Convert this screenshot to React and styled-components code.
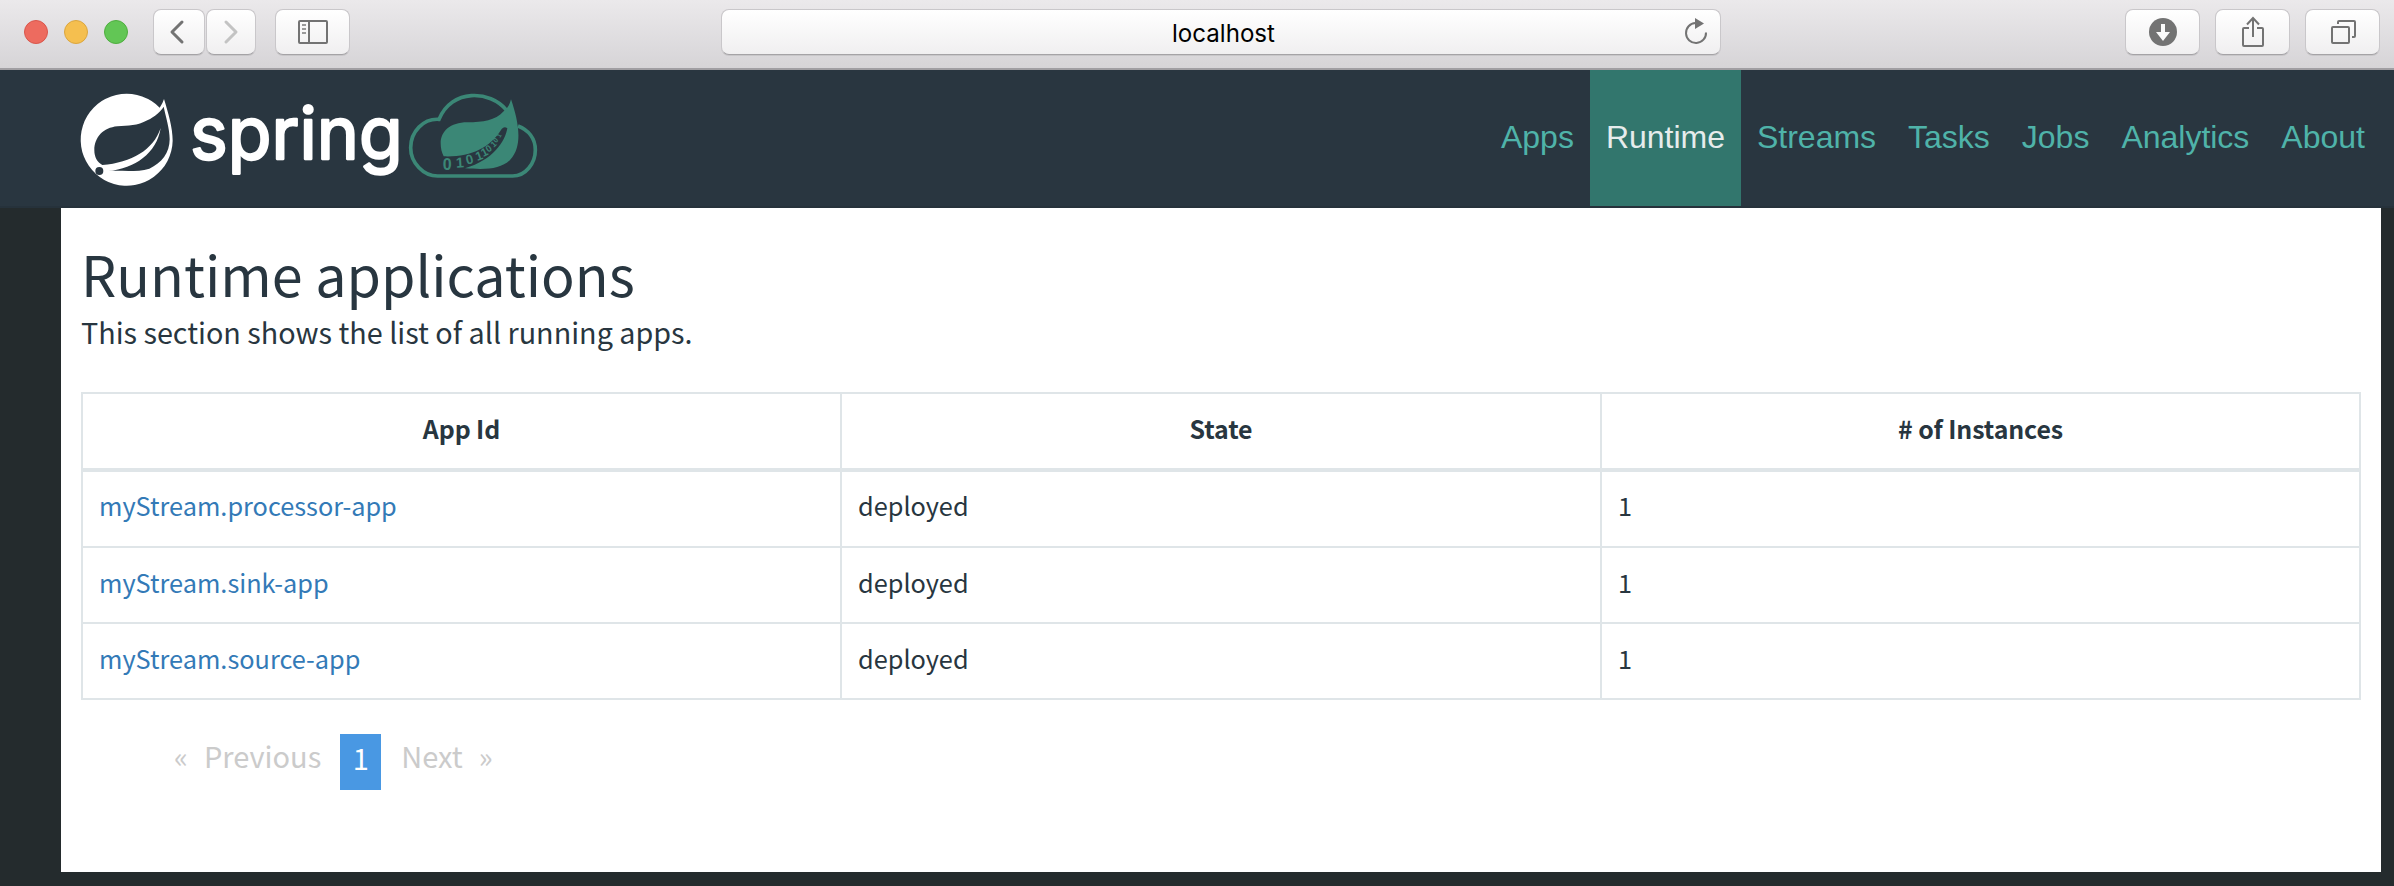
import React from 'react';
import styled, { createGlobalStyle, css } from 'styled-components';

const GlobalStyle = createGlobalStyle`
  * { box-sizing: border-box; }
  body {
    margin: 0;
    background: #242b2d;
    color: #283640;
    font-family: "Noto Sans CJK SC", sans-serif;
  }
`;

const Window = styled.div`
  display: flex;
  flex-direction: column;
  height: 886px;
  overflow: hidden;
`;

/* Browser toolbar */

const TitleBar = styled.header`
  display: flex;
  align-items: flex-start;
  height: 70px;
  padding: 9px 0 0 24px;
  border-bottom: 2px solid #a09ea2;
  background: linear-gradient(#ebe9eb, #d6d4d7);
`;

const Lights = styled.div`
  display: flex;
  gap: 16px;
  margin: 11px 25px 0 0;
`;

const Light = styled.span`
  width: 24px;
  height: 24px;
  border-radius: 50%;
  border: 1px solid ${(p) => p.$edge};
  background: ${(p) => p.$fill};
`;

const controlFace = css`
  display: flex;
  align-items: center;
  justify-content: center;
  height: 46px;
  padding: 0;
  border: 1px solid #c9c7ca;
  border-bottom-color: #a5a3a6;
  border-radius: 8px;
  background: linear-gradient(#ffffff, #f0eff0);
  box-shadow: 0 1px 0 rgba(0, 0, 0, 0.08);
`;

const ToolButton = styled.button`
  ${controlFace}
  width: ${(p) => p.$width || 75}px;
  padding-right: ${(p) => p.$nudge || 0}px;
`;

const History = styled.div`
  display: flex;
  gap: 1px;
  margin-right: 19px;
`;

const AddressBar = styled.div`
  ${controlFace}
  position: relative;
  width: 1000px;
  margin: 0 404px 0 371px;
  padding: 3px 0 0 5px;
  color: #000;
  font: 24.1px/41px Inter, sans-serif;
`;

const Reload = styled.svg`
  position: absolute;
  top: 7px;
  right: 12px;
`;

const Actions = styled.div`
  display: flex;
  gap: 15px;
`;

/* Site header */

const SiteHeader = styled.div`
  display: flex;
  align-items: flex-start;
  height: 138px;
  padding-left: 81px;
  border-bottom: 2px solid #26323b;
  background: #293640;
`;

const LogoArt = styled.svg`
  width: 456px;
  height: 92px;
  margin: 24px 948px 0 0;
  flex: none;
  overflow: visible;
`;

const Nav = styled.nav`
  display: flex;
`;

const NavLink = styled.a`
  height: 136px;
  padding: 0 16px;
  color: ${(p) => (p.$active ? '#e6ecec' : '#4fb3a9')};
  background: ${(p) => (p.$active ? '#32766d' : 'transparent')};
  font: 32px/135px "Liberation Sans", sans-serif;
  letter-spacing: -0.01px;
  white-space: nowrap;
`;

/* Page */

const Panel = styled.main`
  width: 2320px;
  height: 664px;
  margin-left: 61px;
  padding: 35px 20px 0;
  background: #fff;
`;

const Title = styled.h1`
  margin: 0;
  font-size: 55.65px;
  font-weight: 400;
  line-height: 60px;
`;

const Lead = styled.p`
  margin: 9px 0 40px;
  font-size: 28.75px;
  line-height: 40px;
`;

const line = '#dfe5e8';

const Table = styled.table`
  width: 2280px;
  table-layout: fixed;
  border-collapse: separate;
  border-spacing: 0;
  border-top: 2px solid ${line};
  border-right: 2px solid ${line};
`;

const Column = styled.col`
  width: ${(p) => p.$width}px;
`;

const HeadCell = styled.th`
  height: 78px;
  padding: 0 0 7px;
  border-left: 2px solid ${line};
  border-bottom: 4px solid ${line};
  font-size: 24.9px;
  font-weight: 600;
  line-height: 36px;
  letter-spacing: -0.1px;
`;

const Cell = styled.td`
  height: 76px;
  padding: 0 16px 7px;
  border-left: 2px solid ${line};
  border-bottom: 2px solid ${line};
  font-size: 25.3px;
  line-height: 36px;

  tr:first-child > & {
    padding-bottom: 9px;
  }
`;

const AppLink = styled.a`
  color: #337ab7;
`;

const Pager = styled.div`
  display: flex;
  align-items: flex-start;
  margin: 34px 0 0 93px;
  color: #cbcbcb;
  font-size: 29px;
  line-height: 42px;
  white-space: nowrap;
`;

const Step = styled.span`
  display: flex;
  gap: ${(p) => p.$gap}px;
`;

const CurrentPage = styled.span`
  width: 41px;
  height: 56px;
  margin: 0 20px 0 19px;
  background: #4998e3;
  color: #fff;
  line-height: 46px;
  text-align: center;
`;

const ink = '#737373';

const Chevron = ({ flip, color }) => (
  <svg width="16" height="26" viewBox="0 0 16 26" fill="none" stroke={color} strokeWidth="3" strokeLinecap="round" strokeLinejoin="round">
    <path d={flip ? 'M3 3L13 13L3 23' : 'M13 3L3 13L13 23'} />
  </svg>
);

const SidebarIcon = () => (
  <svg width="30" height="24" viewBox="0 0 30 24" fill="none" stroke={ink} strokeWidth="2">
    <rect x="1" y="1" width="28" height="22" rx="1" />
    <path d="M11 1V23" />
    <path d="M4 5H8M4 9H8M4 13H8" stroke="#9a9a9a" />
  </svg>
);

const DownloadIcon = () => (
  <svg width="28" height="28" viewBox="0 0 28 28">
    <circle cx="14" cy="14" r="14" fill={ink} />
    <path d="M12 6H16V14H21L14 23L7 14H12Z" fill="#fafafa" />
  </svg>
);

const ShareIcon = () => (
  <svg width="24" height="32" viewBox="0 0 24 32" fill="none" stroke={ink} strokeWidth="2">
    <path d="M8 12H3Q2 12 2 13V29Q2 30 3 30H21Q22 30 22 29V13Q22 12 21 12H16" />
    <path d="M12 21V3M6 8.500L12 2L18 8.500" />
  </svg>
);

const TabsIcon = () => (
  <svg width="26" height="26" viewBox="0 0 26 26" fill="none" stroke={ink} strokeWidth="2">
    <rect x="2" y="8" width="17" height="16" rx="1" />
    <path d="M8 5V3Q8 2 9 2H24Q25 2 25 3V17Q25 18 24 18H22" />
  </svg>
);

const binary = [
  ['0', 1148, 269, 48, 0],
  ['1', 1189, 263, 43, -4],
  ['0', 1221, 254, 40, -14],
  ['1', 1252, 243, 37, -20],
  ['1', 1270, 231, 34, -26],
  ['0', 1285, 218, 29, -34],
  ['1', 1301, 203, 25, -42],
  ['0', 1309, 190, 21, -50],
  ['1', 1320, 174, 18, -58],
];

const SpringLogo = () => (
  <LogoArt viewBox="63 42 1368 276" role="img" aria-label="Spring Cloud Data Flow">
    <path
      fill="#fff"
      fillRule="evenodd"
      d="M299 83A138 138 0 1 0 338 182C338 142 325 100 312 57Q308 71 299 83Z
         M311 80C317 110 329 145 329 178C329 218 305 250 268 266C230 277 190 271 145 273C225 266 290 220 302 144C280 210 215 248 127 255C112 247 103 232 103 211C103 172 130 143 172 139C205 136 232 138 262 121C286 109 301 96 311 80Z"
    />
    <circle cx="118" cy="273" r="12" fill="#293640" />
    <text
      x="390"
      y="237"
      fill="#fff"
      stroke="#fff"
      strokeWidth="7"
      strokeLinejoin="round"
      fontFamily="Inter"
      fontSize="216"
      textLength="638"
      lengthAdjust="spacingAndGlyphs"
    >
      spring
    </text>
    <g fill="none" stroke="#3b8776" strokeWidth="11">
      <path d="M1340 91C1290 30 1175 25 1137 118C1090 115 1052 155 1052 203C1052 248 1090 288 1133 288H1358C1397 288 1426 250 1426 210C1426 175 1405 150 1374 138" />
    </g>
    <g fill="#3b8776">
      <path d="M1353 58C1349 75 1342 84 1331 94C1305 122 1270 127 1222 127C1170 127 1142 155 1142 190C1142 205 1145 217 1151 229C1230 232 1290 205 1325 147Q1333 137 1342 145C1335 185 1300 240 1215 265C1280 269 1320 268 1350 240C1390 198 1376 125 1353 58Z" />
      {binary.map(([digit, x, y, size, turn], i) => (
        <text key={i} fontFamily="Liberation Sans" fontWeight="700" fontSize={size} transform={`translate(${x} ${y}) rotate(${turn})`}>
          {digit}
        </text>
      ))}
    </g>
  </LogoArt>
);

const links = ['Apps', 'Runtime', 'Streams', 'Tasks', 'Jobs', 'Analytics', 'About'];

const apps = [
  { id: 'myStream.processor-app', state: 'deployed', instances: 1 },
  { id: 'myStream.sink-app', state: 'deployed', instances: 1 },
  { id: 'myStream.source-app', state: 'deployed', instances: 1 },
];

export default function App() {
  return (
    <Window>
      <GlobalStyle />
      <TitleBar>
        <Lights>
          <Light $fill="#ed6b5f" $edge="#d9564c" />
          <Light $fill="#f5bf4f" $edge="#dba63f" />
          <Light $fill="#62c655" $edge="#4fae3f" />
        </Lights>
        <History>
          <ToolButton $width={52} $nudge={4} aria-label="Back"><Chevron color={ink} /></ToolButton>
          <ToolButton $width={50} aria-label="Forward"><Chevron flip color="#c3c3c3" /></ToolButton>
        </History>
        <ToolButton aria-label="Sidebar"><SidebarIcon /></ToolButton>
        <AddressBar>
          localhost
          <Reload width="24" height="28" viewBox="0 0 24 28">
            <path d="M11.500 6A10 10 0 1 0 22 15.500" fill="none" stroke={ink} strokeWidth="2" />
            <path d="M11 1L20 6.500L11 12Z" fill={ink} />
          </Reload>
        </AddressBar>
        <Actions>
          <ToolButton aria-label="Downloads"><DownloadIcon /></ToolButton>
          <ToolButton aria-label="Share"><ShareIcon /></ToolButton>
          <ToolButton aria-label="Tabs"><TabsIcon /></ToolButton>
        </Actions>
      </TitleBar>
      <SiteHeader>
        <SpringLogo />
        <Nav>
          {links.map((name) => (
            <NavLink key={name} $active={name === 'Runtime'}>{name}</NavLink>
          ))}
        </Nav>
      </SiteHeader>
      <Panel>
        <Title>Runtime applications</Title>
        <Lead>This section shows the list of all running apps.</Lead>
        <Table>
          <colgroup>
            <Column $width={759} />
            <Column $width={760} />
            <Column $width={759} />
          </colgroup>
          <thead>
            <tr>
              <HeadCell>App Id</HeadCell>
              <HeadCell>State</HeadCell>
              <HeadCell># of Instances</HeadCell>
            </tr>
          </thead>
          <tbody>
            {apps.map((app) => (
              <tr key={app.id}>
                <Cell><AppLink>{app.id}</AppLink></Cell>
                <Cell>{app.state}</Cell>
                <Cell>{app.instances}</Cell>
              </tr>
            ))}
          </tbody>
        </Table>
        <Pager>
          <Step $gap={16}><span>«</span><span>Previous</span></Step>
          <CurrentPage>1</CurrentPage>
          <Step $gap={16}><span>Next</span><span>»</span></Step>
        </Pager>
      </Panel>
    </Window>
  );
}
